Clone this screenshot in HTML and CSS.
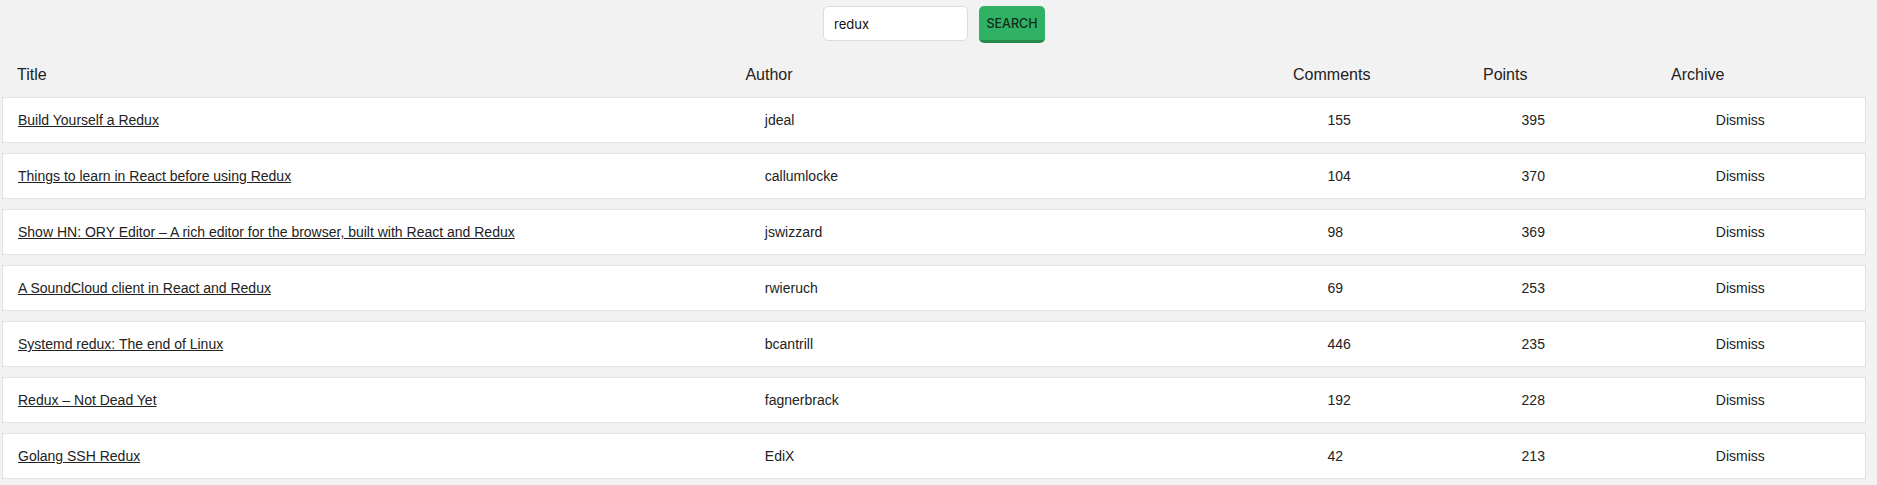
FILE: index.html
```html
<!DOCTYPE html>
<html lang="en">
<head>
<meta charset="utf-8">
<title>Hacker News Search</title>
<link rel="stylesheet" href="styles.css">
</head>
<body>
<div class="page">
  <div class="interactions">
    <form class="search-form">
      <input class="search-input" type="text" value="redux">
      <button class="search-button" type="button">SEARCH</button>
    </form>
  </div>
  <div class="table">
    <div class="table-header">
      <span>Title</span>
      <span>Author</span>
      <span>Comments</span>
      <span>Points</span>
      <span>Archive</span>
    </div>
    <div class="table-row">
      <span><a href="#">Build Yourself a Redux</a></span>
      <span>jdeal</span>
      <span>155</span>
      <span>395</span>
      <span><button class="button-inline" type="button">Dismiss</button></span>
    </div>
    <div class="table-row">
      <span><a href="#">Things to learn in React before using Redux</a></span>
      <span>callumlocke</span>
      <span>104</span>
      <span>370</span>
      <span><button class="button-inline" type="button">Dismiss</button></span>
    </div>
    <div class="table-row">
      <span><a href="#">Show HN: ORY Editor – A rich editor for the browser, built with React and Redux</a></span>
      <span>jswizzard</span>
      <span>98</span>
      <span>369</span>
      <span><button class="button-inline" type="button">Dismiss</button></span>
    </div>
    <div class="table-row">
      <span><a href="#">A SoundCloud client in React and Redux</a></span>
      <span>rwieruch</span>
      <span>69</span>
      <span>253</span>
      <span><button class="button-inline" type="button">Dismiss</button></span>
    </div>
    <div class="table-row">
      <span><a href="#">Systemd redux: The end of Linux</a></span>
      <span>bcantrill</span>
      <span>446</span>
      <span>235</span>
      <span><button class="button-inline" type="button">Dismiss</button></span>
    </div>
    <div class="table-row">
      <span><a href="#">Redux – Not Dead Yet</a></span>
      <span>fagnerbrack</span>
      <span>192</span>
      <span>228</span>
      <span><button class="button-inline" type="button">Dismiss</button></span>
    </div>
    <div class="table-row">
      <span><a href="#">Golang SSH Redux</a></span>
      <span>EdiX</span>
      <span>42</span>
      <span>213</span>
      <span><button class="button-inline" type="button">Dismiss</button></span>
    </div>
  </div>
</div>
</body>
</html>
```

FILE: styles.css
```css
html, body {
  margin: 0;
  padding: 0;
}

body {
  background: #f2f2f2;
  color: #222222;
  font: 400 14px "Liberation Sans", Arial, sans-serif;
}

.page {
  padding: 6px 11px 0 2px;
}

.interactions {
  display: flex;
  justify-content: center;
}

.search-form {
  display: flex;
  align-items: flex-start;
  gap: 11px;
  margin: 0;
}

.search-input {
  box-sizing: border-box;
  width: 145px;
  height: 35px;
  padding: 0 10px;
  border: 1px solid #dcdcdc;
  border-radius: 5px;
  background: #ffffff;
  color: #111111;
  font: 400 13px Inter, "Noto Sans", sans-serif;
  outline: none;
}

.search-button {
  box-sizing: border-box;
  width: 66px;
  height: 37px;
  margin: 0;
  padding: 0;
  border: 0;
  border-bottom: 3px solid #24894b;
  border-radius: 5px;
  background: #30b264;
  color: #15291c;
  font: 500 12.5px Inter, "Noto Sans", sans-serif;
  cursor: pointer;
}

.table {
  margin: 20px 0;
}

.table-header {
  display: grid;
  grid-template-columns: 39.5% 29.7% 10.3% 10.2% 1fr;
  line-height: 24px;
  font-size: 16px;
  padding: 0 10px;
}

.table-header > span {
  padding: 0 5px;
  overflow: hidden;
  white-space: nowrap;
}

.table-row {
  display: grid;
  grid-template-columns: calc(40% + 10px) calc(30% + 10px) calc(10% + 10px) calc(10% + 10px) 1fr;
  line-height: 24px;
  white-space: nowrap;
  margin: 10px 0;
  padding: 10px;
  background: #ffffff;
  border: 1px solid #e2e2e2;
}

.table-row > span {
  padding: 0 5px;
  overflow: hidden;
  text-overflow: ellipsis;
}

.table-row a {
  color: #222222;
  text-decoration: underline;
}

.button-inline {
  border: 0;
  background: transparent;
  color: inherit;
  padding: 0;
  margin: 0;
  font: inherit;
  line-height: 24px;
  cursor: pointer;
}
```
